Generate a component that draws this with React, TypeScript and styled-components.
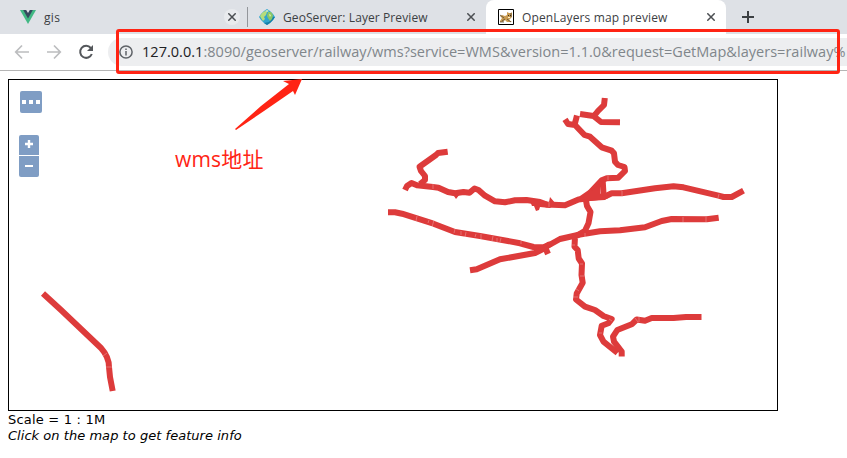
import React from 'react';
import styled, { createGlobalStyle } from 'styled-components';

const GlobalStyle = createGlobalStyle`
  * { box-sizing: border-box; }
  html, body { margin: 0; background: #fff; }
  body { width: 847px; height: 458px; overflow: hidden; }
`;

const Browser = styled.div`
  position: relative;
  width: 847px;
  height: 458px;
  overflow: hidden;
  background: #fff;
`;

const TabStrip = styled.div`
  display: flex;
  height: 34px;
  background: #dee1e6;
`;

const Tab = styled.div<{ $width: number; $pad: number; $active?: boolean }>`
  display: flex;
  align-items: center;
  width: ${(p) => p.$width}px;
  height: 34px;
  padding: 0 7px 0 ${(p) => p.$pad}px;
  border-radius: 8px 8px 0 0;
  background: ${(p) => (p.$active ? '#fff' : 'transparent')};
`;

const Favicon = styled.svg`
  flex: none;
  width: 16px;
  height: 16px;
`;

const TabTitle = styled.span<{ $spacing: number }>`
  flex: 1;
  margin-left: 8px;
  padding-top: 2px;
  font: 12px/18px 'Open Sans', sans-serif;
  letter-spacing: ${(p) => p.$spacing}px;
  color: #3c4043;
  white-space: nowrap;
`;

const CloseButton = styled.span<{ $round?: boolean }>`
  display: flex;
  align-items: center;
  justify-content: center;
  width: 16px;
  height: 16px;
  border-radius: 50%;
  background: ${(p) => (p.$round ? '#e9ebee' : 'transparent')};
`;

const Divider = styled.span`
  width: 1px;
  height: 20px;
  margin-top: 7px;
  background: #93969b;
`;

const NewTab = styled.span`
  display: flex;
  align-items: center;
  margin-left: 16px;
`;

const Toolbar = styled.div`
  display: flex;
  align-items: center;
  height: 37px;
  border-bottom: 1px solid #b5b5b5;
  background: #fff;
`;

const NavIcons = styled.div`
  display: flex;
  flex: none;
  align-items: center;
  gap: 16px;
  width: 108px;
  padding-left: 14px;
`;

const AddressBar = styled.div`
  display: flex;
  align-items: center;
  flex: none;
  width: 760px;
  height: 28px;
  padding-left: 11px;
  border-radius: 14px 0 0 14px;
  background: #edeef0;
`;

const Url = styled.span`
  margin-left: 9px;
  font: 14.5px/20px 'Open Sans', sans-serif;
  letter-spacing: 0.03px;
  color: #80868b;
  white-space: nowrap;
`;

const Host = styled.span`
  color: #202124;
`;

const Page = styled.main`
  padding: 8px 0 0 8px;
`;

const MapFrame = styled.div`
  position: relative;
  width: 770px;
  height: 332px;
  margin-bottom: 1px;
  border: 1px solid #000;
`;

const Railways = styled.svg`
  display: block;
`;

const Controls = styled.div`
  position: absolute;
  left: 10px;
  top: 11px;
`;

const ControlButton = styled.div<{ $options?: boolean; $last?: boolean }>`
  display: flex;
  align-items: center;
  justify-content: center;
  width: ${(p) => (p.$options ? 22 : 20)}px;
  height: ${(p) => (p.$options ? 22 : p.$last ? 21 : 20)}px;
  margin: ${(p) => (p.$options ? '0 0 22px 1px' : '0 0 1px')};
  padding-bottom: ${(p) => (p.$options ? 0 : 2)}px;
  border-radius: ${(p) => (p.$options ? '2px' : p.$last ? '0 0 2px 2px' : '2px 2px 0 0')};
  background: #7f9dc4;
`;

const MapInfo = styled.div<{ $italic?: boolean }>`
  font: ${(p) => (p.$italic ? 'italic' : 'normal')} 13px/16px 'DejaVu Sans', sans-serif;
  letter-spacing: ${(p) => (p.$italic ? 0.04 : 0.2)}px;
  color: #000;
`;

const Highlight = styled.div`
  position: absolute;
  left: 116px;
  top: 29px;
  width: 724px;
  height: 45px;
  border: 3px solid #ff2414;
  border-radius: 3px;
`;

const Arrow = styled.svg`
  position: absolute;
  left: 225px;
  top: 74px;
`;

const Caption = styled.div`
  position: absolute;
  left: 175px;
  top: 145px;
  font: 21px/28px 'Open Sans', 'Noto Sans CJK SC', sans-serif;
  letter-spacing: 0.2px;
  color: #ff2414;
  white-space: nowrap;
`;

const tracks = [
  // south-west line
  'M43 293.5L61 310L101 348Q109 357 109 367L110 377L112.700 391',
  // western lines
  'M388 212.300L395 212.300L402 213.700L433.500 223.700L455 232L480 236L506.500 240.700L520 243.300L533.500 247L543.500 247.300L551 244L560 239L580 234.500L600 231.300L620 230.300L645 227.300L661.700 221L671.700 219L706.700 219.300L718.700 217.700',
  'M470 270.300L476.700 269.300L500 259.300L535 253L543 249L550 244',
  'M545 247L548 254',
  'M447.700 151.700L438 153L436 155L419.500 166.700L421 171L425 176L425 180L420 184',
  'M405 190L407 186L411.500 183L417 185.300L433 187L438.500 187.700L448 192L455 193.300L463.500 192L469.500 192.700L474.500 188.500L478.500 190L485 195.700L495 201.300L505 202.300L515 200.300L526.500 200L540 202L546.700 204.500L565 205.300L578.500 199.500L600 196.700L606 196L611.700 193.300L621.700 193.300L655 188.300L673.500 186.300L683.500 187.300L718.500 195.700L723.500 197L731.700 197L743.500 190.700',
  // northern branch
  'M565 119.300L568 124L575 125L584.500 135L590 136.700L601.700 147.300L611.700 150.700L614 153.300L615 161.700L618 165L624.500 167L625 171L618.300 177.700L606.700 178.300L601.700 180.300L590 192.700L581 199',
  'M574.500 125L577 115.500',
  'M602.700 181L603.500 194L606 198',
  'M580 114L593.500 116L601 122L620 122.300M594 116L598 111L604 105L604.800 98',
  // central connector and southern branch
  'M585.700 199L587 206L590.500 212L588.500 223.300L585 230.700L575 236.700L574.500 246.700L577.700 250L578.700 258.500L582 263.500L581.500 275L582.700 282.700L576.700 293.500L576 299.500L585 306.700L595 310L603.500 316L611.700 319L608.300 323.300L601.700 325.700L600 335L603.500 341.700L617.500 353',
  'M621.700 356.500L621.700 351.700L614 341.700L613 336.700L617.300 330L631.700 324.300L636.700 319.500L645 320.700L651.700 318L673.500 318L686 317L701.500 317',
];

const yards = 'M529 199L532 206L534 206L536 211L539 210L540 207L550 208L556 204L550 197L549 202zM452 193L456 199L460 194zM582 198L600 184L600 195L611 196L605 200L588 201zM632 321l3-3 2 3zM553 241l7-4 3 2z';

const joints = 'M417 216l-1 5M429 220l-1 3M434 220l-2 7M455 229l-1 4M461 231v4M466 232l-1 5M476 234l-1 3M481 234v5M493 236l-1 5M497 238v4M501 238l-1 4M521 241v3M433 184v5M608 176v4M622 191v5M683 217v5M706 217v5M719 194l-1 4M572 245h3M580 264h3M580 276h4M573 297h5M575 288l4 3M599 333h3M609 319l3 2M635 318l3 4M639 317v5M106 367h6M103 356l4-3M549 202v5M585 233v4';

const Close = ({ round }: { round?: boolean }) => (
  <CloseButton $round={round}>
    <svg width="8" height="8" viewBox="0 0 8 8"><path d="M.3.3l7.400 7.400M7.700.3L.3 7.700" stroke="#4b4e52" strokeWidth="1.500" /></svg>
  </CloseButton>
);

const VueIcon = () => (
  <Favicon viewBox="0 0 16 16">
    <path d="M0 1h16L8 15z" fill="#41b883" />
    <path d="M3.200 1h9.600L8 9.400z" fill="#35495e" />
    <path d="M6.200 1h3.600L8 4z" fill="#dee1e6" />
  </Favicon>
);

const GlobeIcon = () => (
  <Favicon viewBox="0 0 16 16">
    <path d="M8 0l3 2 3 3 2 3-2 3-3 3-3 2-3-2-3-3-2-3 2-3 3-3z" fill="#31a5cd" />
    <path d="M10 13l4-5 2 0-2 3-3 3-3 2-3-2z" fill="#147ea8" />
    <path d="M3 4l3-2 2 1-1 3-2 2 1 2-2 2-2-3-1-2z" fill="#b5dc7c" />
    <path d="M9 3l3 0 2 3-1 4-2 2-2-3-1-2z" fill="#8bc766" />
    <path d="M6 2l2-1 2 1-2 1zM10 5l2 1-1 2z" fill="#e3f2ba" />
  </Favicon>
);

const TomcatIcon = () => (
  <Favicon viewBox="0 0 16 16">
    <path d="M.5.5h15v15H.5z" fill="#fff" stroke="#000" />
    <path d="M2 12l2-3-2-2 2-1 3 1 2-1V3l2 1h2l1-1v5l-2 2-1 1 3 2H9l-2-2-2 2H2z" fill="#c99b51" />
    <path d="M2 6l4 3M4 12l3-2M9 10l4 3M2 13h4M13 4v4" stroke="#584a35" strokeWidth=".8" />
    <path d="M10 6h1v1h-1zM12 6h1v1h-1z" fill="#33291d" />
    <path d="M10 8h2v1h-2z" fill="#fff1c8" />
  </Favicon>
);

export default function App() {
  return (
    <Browser>
      <GlobalStyle />
      <TabStrip>
        <Tab $width={247} $pad={20}>
          <VueIcon />
          <TabTitle $spacing={0.3}>gis</TabTitle>
          <Close round />
        </Tab>
        <Divider />
        <Tab $width={238} $pad={11}>
          <GlobeIcon />
          <TabTitle $spacing={0.09}>GeoServer: Layer Preview</TabTitle>
          <Close />
        </Tab>
        <Tab $width={240} $pad={12} $active>
          <TomcatIcon />
          <TabTitle $spacing={0.14}>OpenLayers map preview</TabTitle>
          <Close />
        </Tab>
        <NewTab>
          <svg width="12" height="12" viewBox="0 0 12 12"><path d="M6 0v12M0 6h12" stroke="#3c4043" strokeWidth="2" /></svg>
        </NewTab>
      </TabStrip>
      <Toolbar>
        <NavIcons>
          <svg width="16" height="16" viewBox="0 0 16 16" fill="none" stroke="#bcbdbf" strokeWidth="1.700"><path d="M15 8H2M8 1.500L1.700 8 8 14.500" /></svg>
          <svg width="16" height="16" viewBox="0 0 16 16" fill="none" stroke="#bcbdbf" strokeWidth="1.700"><path d="M1 8h13M8 1.500L14.300 8 8 14.500" /></svg>
          <svg width="16" height="16" viewBox="0 0 16 16" fill="none" stroke="#54575b" strokeWidth="2"><path d="M12.800 4A6 6 0 1 0 13.800 10" /><path d="M15 1v6H9z" fill="#54575b" stroke="none" /></svg>
        </NavIcons>
        <AddressBar>
          <svg width="14" height="14" viewBox="0 0 14 14" fill="none" stroke="#5f6368" strokeWidth="1.500"><circle cx="7" cy="7" r="6.100" /><path d="M7 6v4.500M7 3.500v1.500" /></svg>
          <Url><Host>127.0.0.1</Host>:8090/geoserver/railway/wms?service=WMS&amp;version=1.1.0&amp;request=GetMap&amp;layers=railway%</Url>
        </AddressBar>
      </Toolbar>
      <Page>
        <MapFrame>
          <Railways width="768" height="330" viewBox="9 80 768 330" fill="none" stroke="#dd3b3b" strokeWidth="6" strokeLinejoin="round">
            {tracks.map((d) => <path key={d} d={d} />)}
            <path d={yards} fill="#dd3b3b" stroke="none" />
            <path d={joints} stroke="#fff" strokeOpacity=".45" strokeWidth=".6" />
          </Railways>
          <Controls>
            <ControlButton $options><svg width="18" height="4"><path d="M0 0h4v4H0zM7 0h4v4H7zM14 0h4v4h-4z" fill="#fff" /></svg></ControlButton>
            <ControlButton><svg width="8" height="8"><path d="M4 0v8M0 4h8" stroke="#fff" strokeWidth="2.400" /></svg></ControlButton>
            <ControlButton $last><svg width="8" height="2"><path d="M0 0h8v2H0z" fill="#fff" /></svg></ControlButton>
          </Controls>
        </MapFrame>
        <MapInfo>Scale = 1 : 1M</MapInfo>
        <MapInfo $italic>Click on the map to get feature info</MapInfo>
      </Page>
      <Highlight />
      <Arrow width="90" height="60" viewBox="225 74 90 60"><path d="M235 129L261 106L289 84L283 81L302 79L295 95L293 91L264 111L236 130z" fill="#ff2414" /></Arrow>
      <Caption>wms地址</Caption>
    </Browser>
  );
}
